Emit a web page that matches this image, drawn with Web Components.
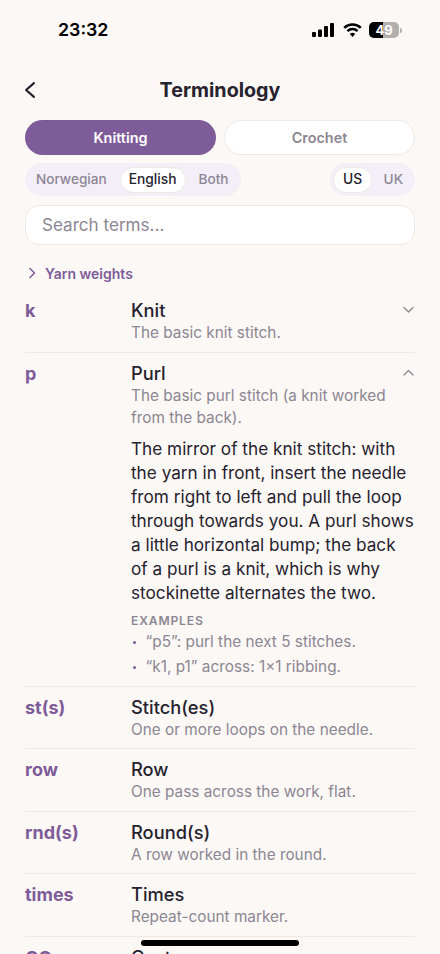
<!DOCTYPE html>
<html lang="en">
<head>
<meta charset="utf-8">
<title>Terminology</title>
<style>
  html, body { margin: 0; padding: 0; height: 954px; overflow: hidden; background: #fcf8f5; }
  body { font-family: Inter, "Liberation Sans", sans-serif; color: #26222e; }
  #list { display: block; margin: 7.250px 25px 0; }
  term-row li { position: relative; padding-left: 14.500px; }
  term-row li::before { content: ""; position: absolute; left: 2px; top: 11px; width: 3px; height: 3px; border-radius: 50%; background: #7e5c99; }
</style>
</head>
<body>
<status-bar></status-bar>
<nav-header>Terminology</nav-header>
<craft-tabs></craft-tabs>
<filter-row></filter-row>
<search-box></search-box>
<section-link>Yarn weights</section-link>
<div id="list">
  <term-row abbr="k" name="Knit" desc="The basic knit stitch." chevron="down"></term-row>
  <term-row abbr="p" name="Purl" desc="The basic purl stitch (a knit worked from the back)." chevron="up">
    <p>The mirror of the knit stitch: with<br>the yarn in front, insert the needle<br>from right to left and pull the loop<br>through towards you. A purl shows<br>a little horizontal bump; the back<br>of a purl is a knit, which is why<br>stockinette alternates the two.</p>
    <h4>EXAMPLES</h4>
    <ul>
      <li>“p5”: purl the next 5 stitches.</li>
      <li>“k1, p1” across: 1×1 ribbing.</li>
    </ul>
  </term-row>
  <term-row abbr="st(s)" name="Stitch(es)" desc="One or more loops on the needle."></term-row>
  <term-row abbr="row" name="Row" desc="One pass across the work, flat."></term-row>
  <term-row abbr="rnd(s)" name="Round(s)" desc="A row worked in the round."></term-row>
  <term-row abbr="times" name="Times" desc="Repeat-count marker."></term-row>
  <term-row abbr="CO" name="Cast on" chevron="down"></term-row>
</div>
<home-bar></home-bar>

<script>
class StatusBar extends HTMLElement {
  constructor() {
    super();
    this.attachShadow({ mode: "open" });
  }

  connectedCallback() {
    this.shadowRoot.innerHTML = /* html */`
    <style>
      :host { display: flex; align-items: center; justify-content: space-between; height: 60px; padding: 0 38px 0 58px; color: #000; }
      .time { font-size: 17.800px; font-weight: 600; line-height: 60px; }
      .icons { display: flex; align-items: center; }
      .signal { margin-right: 9px; }
      .wifi { margin-right: 7px; }
      .battery { display: flex; align-items: center; }
      .cell { position: relative; width: 30px; height: 16px; border-radius: 5px; overflow: hidden; background: #b3afac; font-size: 13px; font-weight: 700; line-height: 16px; text-align: center; color: #fff; }
      .fill { position: absolute; left: 0; top: 0; bottom: 0; width: 14px; background: #000; }
      .num { position: relative; }
      .nub { width: 2px; height: 5px; margin-left: 1px; border-radius: 0 2px 2px 0; background: #b3afac; }
    </style>
    <span class="time">23:32</span>
    <div class="icons">
      <svg class="signal" width="22" height="14" viewBox="0 0 22 14" fill="#000">
        <rect x="0" y="9" width="4" height="5" rx="1"/>
        <rect x="6" y="6.500" width="4" height="7.500" rx="1"/>
        <rect x="12" y="3" width="4" height="11" rx="1"/>
        <rect x="18" y="0" width="4" height="14" rx="1"/>
      </svg>
      <svg class="wifi" width="19" height="14" viewBox="0 0 19 14" fill="none" stroke="#000" stroke-width="2.500">
        <path d="M1.200 4.900a11.800 11.800 0 0 1 16.600 0"/>
        <path d="M4.400 8.200a7.200 7.200 0 0 1 10.200 0"/>
        <path d="M9.500 14l-2.700-2.900a3.800 3.800 0 0 1 5.400 0z" fill="#000" stroke="none"/>
      </svg>
      <div class="battery">
        <div class="cell"><div class="fill"></div><span class="num">49</span></div>
        <div class="nub"></div>
      </div>
    </div>`;
  }
}

class NavHeader extends HTMLElement {
  constructor() {
    super();
    this.attachShadow({ mode: "open" });
  }

  connectedCallback() {
    this.shadowRoot.innerHTML = /* html */`
    <style>
      :host { display: grid; grid-template-columns: 40px 1fr 40px; align-items: center; height: 42px; margin: 9px 20px 0; }
      svg { display: block; }
      h1 { margin: 0; text-align: center; font-size: 19.700px; font-weight: 700; color: #26222e; }
    </style>
    <svg width="20" height="22" viewBox="0 0 20 22" fill="none" stroke="#26222e" stroke-width="2.200" stroke-linecap="round" stroke-linejoin="round">
      <path d="M13.900 4.100L6.100 11l7.800 6.900"/>
    </svg>
    <h1><slot></slot></h1>`;
  }
}

class CraftTabs extends HTMLElement {
  constructor() {
    super();
    this.attachShadow({ mode: "open" });
  }

  connectedCallback() {
    this.shadowRoot.innerHTML = /* html */`
    <style>
      :host { display: grid; grid-template-columns: 1fr 1fr; gap: 8px; margin: 9px 25px 0; }
      div { height: 35px; padding-bottom: 1px; border-radius: 18px; box-sizing: border-box; display: flex; align-items: center; justify-content: center; font-size: 14.400px; font-weight: 600; }
      .on { background: #7e5c99; color: #fff; }
      .off { background: #fff; border: 1px solid #efe9e4; color: #8c8693; }
    </style>
    <div class="on">Knitting</div>
    <div class="off">Crochet</div>`;
  }
}

class FilterRow extends HTMLElement {
  constructor() {
    super();
    this.attachShadow({ mode: "open" });
  }

  connectedCallback() {
    this.shadowRoot.innerHTML = /* html */`
    <style>
      :host { display: flex; justify-content: space-between; margin: 8px 25px 0; }
      .group { display: flex; align-items: center; height: 33px; padding: 0 3px; border-radius: 17px; background: #f3eef8; box-sizing: border-box; }
      span { display: flex; align-items: center; height: 26px; padding-bottom: 1px; font-size: 13.600px; font-weight: 500; color: #8c8693; border-radius: 13px; box-sizing: border-box; }
      .on { background: #fff; color: #26222e; border: 1px solid #efe9e4; font-size: 13.800px; }
      .lang { gap: 4.500px; padding: 0 4px 0 2.500px; }
      .lang span { padding-left: 8.500px; padding-right: 8.500px; }
      .lang .on { padding-left: 8px; padding-right: 8px; }
      .unit { gap: 3px; }
      .unit span { padding-left: 8.500px; padding-right: 9px; }
    </style>
    <div class="group lang"><span>Norwegian</span><span class="on">English</span><span>Both</span></div>
    <div class="group unit"><span class="on">US</span><span>UK</span></div>`;
  }
}

class SearchBox extends HTMLElement {
  constructor() {
    super();
    this.attachShadow({ mode: "open" });
  }

  connectedCallback() {
    this.shadowRoot.innerHTML = /* html */`
    <style>
      :host { display: flex; align-items: center; height: 40px; margin: 9px 25px 0; padding: 0 16px 1px; box-sizing: border-box; background: #fff; border: 1px solid #efe9e4; border-radius: 14px; }
      span { font-size: 17.100px; color: #8c8693; }
    </style>
    <span>Search terms...</span>`;
  }
}

class SectionLink extends HTMLElement {
  constructor() {
    super();
    this.attachShadow({ mode: "open" });
  }

  connectedCallback() {
    this.shadowRoot.innerHTML = /* html */`
    <style>
      :host { display: flex; align-items: center; gap: 8px; height: 20px; margin: 18px 25px 0 28px; color: #7e5c99; font-size: 14px; font-weight: 600; }
    </style>
    <svg width="9" height="12" viewBox="0 0 9 12" fill="none" stroke="#7e5c99" stroke-width="1.500" stroke-linecap="round" stroke-linejoin="round">
      <path d="M2 1.500L6.500 6 2 10.500"/>
    </svg>
    <span><slot></slot></span>`;
  }
}

class TermRow extends HTMLElement {
  constructor() {
    super();
    this.attachShadow({ mode: "open" });
  }

  static get styles() {
    return /* css */`
      :host { display: grid; grid-template-columns: 106px 1fr 16px; padding: 9px 0 7.500px; border-bottom: 1px solid #efe9e4; }
      .abbr { padding-top: 1px; font-size: 18px; font-weight: 700; line-height: 22px; color: #7e5c99; }
      .name { font-size: 18.300px; font-weight: 500; line-height: 22px; color: #26222e; }
      .desc { margin-top: 1px; font-size: 15.350px; line-height: 22px; color: #8c8693; }
      .desc:empty { display: none; }
      .chevron { display: block; }
      .more { grid-column: 2 / 4; }
      ::slotted(p) { margin: 8px 0 0; font-size: 17.200px; line-height: 24px; white-space: nowrap; color: #26222e; }
      ::slotted(h4) { margin: 7px 0 0; font-size: 12.200px; font-weight: 600; letter-spacing: 0.800px; line-height: 18px; color: #8c8693; }
      ::slotted(ul) { margin: 0.700px 0 -1.200px; padding: 0; list-style: none; font-size: 15.350px; line-height: 24.600px; color: #8c8693; }
    `;
  }

  connectedCallback() {
    const chevron = this.getAttribute("chevron");
    const path = chevron === "up" ? "M5 13l4.500-4.500L14 13" : "M5 8.500l4.500 4.500L14 8.500";
    this.shadowRoot.innerHTML = /* html */`
    <style>${TermRow.styles}</style>
    <div class="abbr">${this.getAttribute("abbr")}</div>
    <div class="head">
      <div class="name">${this.getAttribute("name")}</div>
      <div class="desc">${this.getAttribute("desc") || ""}</div>
    </div>
    ${chevron ? `<svg class="chevron" width="16" height="22" viewBox="0 0 16 22" fill="none" stroke="#8c8693" stroke-width="1.300" stroke-linecap="round" stroke-linejoin="round"><path d="${path}"/></svg>` : "<span></span>"}
    <div class="more"><slot></slot></div>`;
  }
}

class HomeBar extends HTMLElement {
  constructor() {
    super();
    this.attachShadow({ mode: "open" });
  }

  connectedCallback() {
    this.shadowRoot.innerHTML = /* html */`
    <style>
      :host { display: block; position: fixed; left: 141px; top: 940px; width: 158px; height: 6px; border-radius: 3px; background: #000; }
    </style>`;
  }
}

customElements.define("status-bar", StatusBar);
customElements.define("nav-header", NavHeader);
customElements.define("craft-tabs", CraftTabs);
customElements.define("filter-row", FilterRow);
customElements.define("search-box", SearchBox);
customElements.define("section-link", SectionLink);
customElements.define("term-row", TermRow);
customElements.define("home-bar", HomeBar);
</script>
</body>
</html>
